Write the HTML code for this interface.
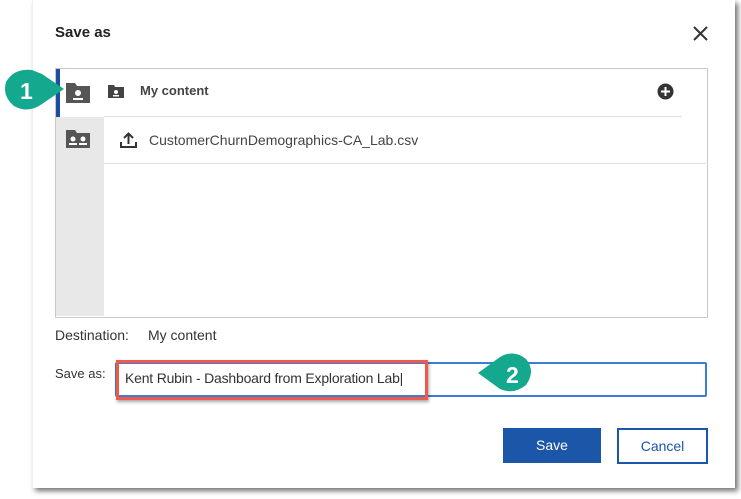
<!DOCTYPE html>
<html><head><style>
body{margin:0;width:741px;height:499px;background:#fff;position:relative;overflow:hidden;font-family:"Liberation Sans",sans-serif;color:#333}
.a{position:absolute}
</style></head><body>
<div class="a" style="left:32px;top:0;width:702px;height:488px;background:#fff;box-shadow:3px 3px 5px rgba(0,0,0,.55);border-left:1px solid #eee"></div>
<div class="a" style="left:55px;top:24px;font-size:15px;font-weight:bold;color:#222">Save as</div>
<svg class="a" style="left:693px;top:26px" width="15" height="15"><path d="M1 1L14 14M14 1L1 14" stroke="#333" stroke-width="2"/></svg>
<div class="a" style="left:55px;top:68px;width:651px;height:248px;border:1px solid #c8c8c8"></div>
<div class="a" style="left:56px;top:117px;width:48px;height:199px;background:#e8e8e8"></div>
<div class="a" style="left:56px;top:69px;width:4px;height:48px;background:#1c4fa0"></div>
<div class="a" style="left:104px;top:116px;width:578px;height:1px;background:#e0e0e0"></div>
<div class="a" style="left:104px;top:163px;width:602px;height:1px;background:#e0e0e0"></div>
<svg class="a" style="left:66px;top:83px" width="24" height="20"><path d="M0 0h9l2 3h13v17H0z" fill="#555"/><circle cx="12" cy="10" r="3" fill="#fff"/><rect x="7" y="15" width="10" height="2" fill="#fff"/></svg>
<svg class="a" style="left:108px;top:85px" width="16" height="13"><path d="M0 0h6l1 2h9v11H0z" fill="#444"/><circle cx="8" cy="7" r="2" fill="#fff"/><rect x="5" y="10" width="6" height="1.5" fill="#fff"/></svg>
<div class="a" style="left:140px;top:83px;font-size:13px;font-weight:bold;color:#444">My content</div>
<svg class="a" style="left:657px;top:83px" width="17" height="17"><circle cx="8.5" cy="8.5" r="8" fill="#333"/><path d="M8.5 4v9M4 8.5h9" stroke="#fff" stroke-width="2"/></svg>
<svg class="a" style="left:66px;top:130px" width="24" height="18"><path d="M0 0h9l2 3h13v15H0z" fill="#555"/><circle cx="7" cy="9" r="2.5" fill="#fff"/><circle cx="17" cy="9" r="2.5" fill="#fff"/><rect x="3" y="13" width="8" height="2" fill="#fff"/><rect x="13" y="13" width="8" height="2" fill="#fff"/></svg>
<svg class="a" style="left:120px;top:132px" width="17" height="16"><path d="M8.5 12V2M4 6l4.5-4.5L13 6M1 10v5h15v-5" fill="none" stroke="#333" stroke-width="2"/></svg>
<div class="a" style="left:149px;top:132px;font-size:14px;color:#444">CustomerChurnDemographics-CA_Lab.csv</div>
<div class="a" style="left:55px;top:327px;font-size:14px;color:#333">Destination:</div>
<div class="a" style="left:148px;top:327px;font-size:14px;color:#333">My content</div>
<div class="a" style="left:55px;top:366px;font-size:13px;color:#333">Save as:</div>
<div class="a" style="left:115px;top:362px;width:588px;height:31px;border:2px solid #3a7fd5;border-radius:2px"></div>
<div class="a" style="left:116px;top:360px;width:306px;height:34px;border:3px solid #f0594b;box-shadow:1px 2px 3px rgba(0,0,0,.35)"></div>
<div class="a" style="left:125px;top:370px;font-size:14px;color:#333;letter-spacing:-0.2px">Kent Rubin - Dashboard from Exploration Lab|</div>
<svg class="a" style="left:474px;top:351px" width="64" height="42"><path d="M4 22 L26 6 Q40 -2 52 8 Q62 20 52 34 Q40 44 26 38 Z" fill="#14a88e"/><text x="32" y="32" font-family="Liberation Sans" font-size="23" font-weight="bold" fill="#fff">2</text></svg>
<svg class="a" style="left:0px;top:68px" width="66" height="44"><path d="M64 21 L42 36 Q28 46 14 38 Q2 28 6 14 Q14 0 32 2 L42 6 Z" fill="#14a88e"/><text x="20" y="31" font-family="Liberation Sans" font-size="23" font-weight="bold" fill="#fff">1</text></svg>
<div class="a" style="left:503px;top:428px;width:98px;height:35px;background:#1c56a8;color:#fff;font-size:14px;text-align:center;line-height:35px">Save</div>
<div class="a" style="left:617px;top:428px;width:87px;height:32px;border:2px solid #1c56a8;color:#1c56a8;font-size:14px;text-align:center;line-height:32px">Cancel</div>
</body></html>
